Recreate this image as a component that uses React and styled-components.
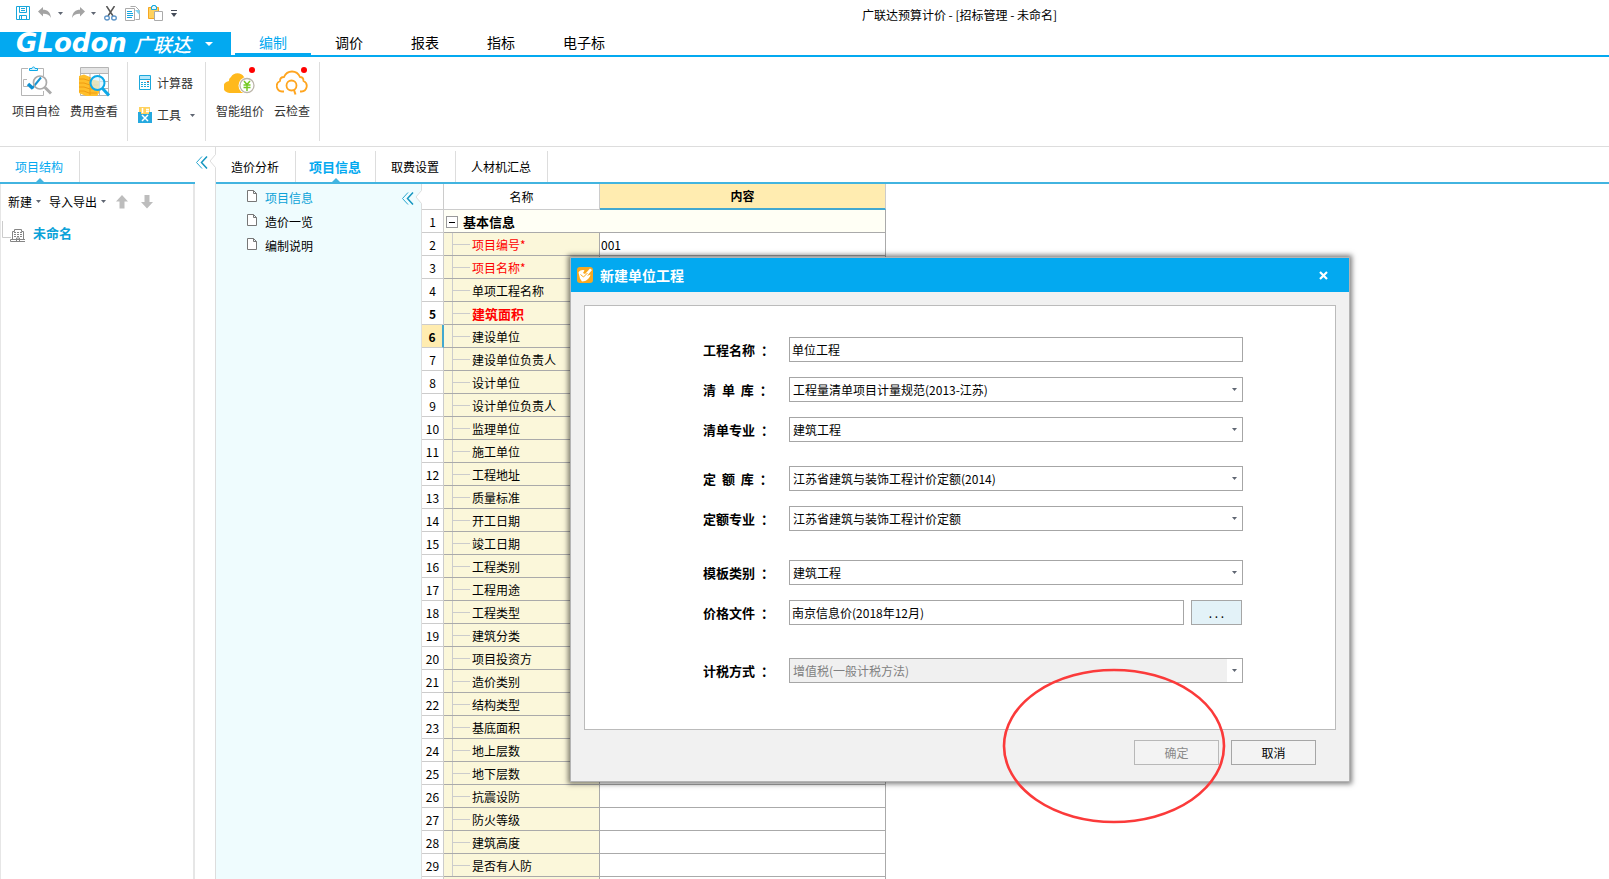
import { useState } from 'react'
import styled, { createGlobalStyle } from 'styled-components'

const menuTabs = ['编制', '调价', '报表', '指标', '电子标']
const mainTabs = ['造价分析', '项目信息', '取费设置', '人材机汇总']
const infoPages = ['项目信息', '造价一览', '编制说明']

const infoRows = [
  { name: '项目编号*', value: '001', required: true },
  { name: '项目名称*', required: true },
  { name: '单项工程名称' },
  { name: '建筑面积', required: true, strong: true },
  { name: '建设单位', current: true },
  { name: '建设单位负责人' },
  { name: '设计单位' },
  { name: '设计单位负责人' },
  { name: '监理单位' },
  { name: '施工单位' },
  { name: '工程地址' },
  { name: '质量标准' },
  { name: '开工日期' },
  { name: '竣工日期' },
  { name: '工程类别' },
  { name: '工程用途' },
  { name: '工程类型' },
  { name: '建筑分类' },
  { name: '项目投资方' },
  { name: '造价类别' },
  { name: '结构类型' },
  { name: '基底面积' },
  { name: '地上层数' },
  { name: '地下层数' },
  { name: '抗震设防' },
  { name: '防火等级' },
  { name: '建筑高度' },
  { name: '是否有人防' },
]

const Caret = ({ color = '#5f6672' }) => (
  <svg width="5" height="3" viewBox="0 0 5 3">
    <path d="M0 0h5L2.5 3z" fill={color} />
  </svg>
)

const SaveIcon = () => (
  <svg width="14" height="14" viewBox="0 0 14 14" fill="none" stroke="#1aa7dc">
    <path d="M.5.5h13v13H.5z" />
    <path d="M3.5.5v6h7v-6M5 2.5h4M5 4.5h4M3.5 13.5v-4h7v4M5.5 10v3" />
  </svg>
)

const UndoIcon = () => (
  <svg width="14" height="12" viewBox="0 0 14 12">
    <path d="M0 4.5 5 0v2.7c4.500 0 7.500 2.300 8 8.300-1.500-3.200-4-4.300-8-4.200V9.500z" fill="#a3a3a3" />
  </svg>
)

const RedoIcon = () => (
  <svg width="14" height="12" viewBox="0 0 14 12">
    <path d="M14 4.500 9 0v2.700C4.500 2.700 1.500 5 1 11c1.500-3.200 4-4.300 8-4.200v2.700z" fill="#a3a3a3" />
  </svg>
)

const CutIcon = () => (
  <svg width="13" height="15" viewBox="0 0 13 15" fill="none">
    <path d="M2.500 0 9 10M10.500 0 4 10" stroke="#555" strokeWidth="1.500" />
    <ellipse cx="3" cy="12" rx="2.300" ry="2" stroke="#5b93c7" strokeWidth="1.300" />
    <ellipse cx="10" cy="12" rx="2.300" ry="2" stroke="#5b93c7" strokeWidth="1.300" />
  </svg>
)

const CopyIcon = () => (
  <svg width="15" height="15" viewBox="0 0 15 15" fill="none">
    <path d="M5.500.5h5l4 4v9h-4" fill="#fff" stroke="#aaa" />
    <path d="M10 4h4.500v5z" fill="#7fd3f2" />
    <path d="M.5 2.500h9v12h-9z" fill="#fff" stroke="#aaa" />
    <path d="M2 5.500h5M2 7.500h6M2 9.500h6M2 11.500h5" stroke="#14a5e0" />
  </svg>
)

const PasteIcon = () => (
  <svg width="15" height="16" viewBox="0 0 15 16" fill="none">
    <path d="M.5 2.500h10v11H.5z" fill="#ffd25e" stroke="#f5a623" />
    <path d="M3.500 1.500h1v-1h3v1h1v3h-5z" fill="#e5f7fd" stroke="#17a8dd" />
    <path d="M6.500 6.500h8v9h-8z" fill="#fff" stroke="#aaa" />
  </svg>
)

const MoreIcon = () => (
  <svg width="6" height="7" viewBox="0 0 6 7" fill="#444b58">
    <path d="M0 0h6v1H0zM0 3h6L3 7z" />
  </svg>
)

const CheckProjectIcon = () => (
  <svg width="32" height="32" viewBox="0 0 32 32" fill="none">
    <path d="M8 2.500H1.500v27h22V25M17 2.500h6.500V10" stroke="#b5b5b5" />
    <path d="M9.500 4.500v-2h2.500c0-2 3-2 3 0h2.500v2z" fill="#d7f3fd" stroke="#0da9e8" />
    <path d="M7 13.500H3.500v7H8" stroke="#b5b5b5" />
    <path d="M12 22.500l9-11" stroke="#1695d3" strokeWidth="2" />
    <path d="M8 18l5 4.500" stroke="#0b8fd0" strokeWidth="3.500" />
    <circle cx="20" cy="16.500" r="6.500" stroke="#aaa" strokeWidth="1.700" />
    <path d="M25 21.500l6 6" stroke="#aaa" strokeWidth="3" />
  </svg>
)

const CostIcon = () => (
  <svg width="32" height="32" viewBox="0 0 32 32" fill="none">
    <path d="M2.500 1.500h28v28h-28z" fill="#fff" stroke="#b5b5b5" />
    <path d="M3 2h27v5H3z" fill="#e4e4e4" />
    <path d="M2.500 7.500h28M2.500 15.500h28M2.500 22.500h28M12 8v21M21.500 8v21" stroke="#b5b5b5" />
    <path d="M1 10l5-1.500 6 2.500v2l9 2v12l-2 3H8L1 27z" fill="#ffbf2b" />
    <path d="M1 13h5l6 2M1 17h5l6 2h8M1 21h5l6 2h8M1 25h5l5 2h8M12 11v18" stroke="#f09c12" />
    <circle cx="19.500" cy="17" r="7" fill="#d9f4fe" fillOpacity=".7" stroke="#0da9e8" strokeWidth="2" />
    <path d="M24.500 22.500l6.500 7" stroke="#0da9e8" strokeWidth="3" />
  </svg>
)

const CalculatorIcon = () => (
  <svg width="14" height="16" viewBox="0 0 14 16" fill="none">
    <path d="M1.500.5h11v14h-11z" fill="#fff" stroke="#1da8dc" />
    <path d="M2 1h10v3H2z" fill="#b6e8fa" />
    <path d="M1.500 4.500h11" stroke="#1da8dc" />
    <path d="M3 7.500h8M3 9.500h8M3 11.500h8" stroke="#1da8dc" strokeDasharray="2 1" />
    <path d="M9 6.500h2" stroke="#f25c3b" />
  </svg>
)

const ToolsIcon = () => (
  <svg width="14" height="16" viewBox="0 0 14 16" fill="none">
    <path d="M1 0h11v7H1z" fill="#ffd25e" />
    <path d="M4.500 1v5M8 2.500h3M8 4.500h3" stroke="#fff" strokeWidth="1.500" />
    <path d="M0 5h3v2h8V5h3v11H0z" fill="#26a9df" />
    <path d="M4 8l6 6M10 8l-6 6" stroke="#fff" strokeWidth="1.500" />
  </svg>
)

const SmartPriceIcon = () => (
  <svg width="32" height="32" viewBox="0 0 32 32" fill="none">
    <path d="M6 27a6 6 0 0 1-1-12 4 4 0 0 1 2-4 7.500 7.500 0 0 1 13 0l4 6-4 10z" fill="#ffb91d" />
    <circle cx="23" cy="19.500" r="8.500" fill="#fff" />
    <circle cx="23" cy="19.500" r="7" fill="#fff" stroke="#bcb6aa" strokeWidth="1.300" />
    <path d="M20 15l3 3.500 3-3.500M23 18.500V25M19.500 19h7M19.500 21.500h7" stroke="#74c922" strokeWidth="1.500" />
    <circle cx="28" cy="4" r="3" fill="#f00" />
  </svg>
)

const CloudCheckIcon = () => (
  <svg width="32" height="32" viewBox="0 0 32 32" fill="none">
    <path d="M8 25.500H6a5.500 5.500 0 0 1-2-10.500c0-3 2-4 4-4 1.500-3.500 4-5.500 8-5.500s6.500 2 8 5.500c2.500 0 3.500 2 3.500 4a5.500 5.500 0 0 1-2 10.500H24" stroke="#ffa51f" strokeWidth="1.800" />
    <circle cx="15.500" cy="19.500" r="5" stroke="#ffa51f" strokeWidth="1.800" />
    <path d="M18 24l1.500 4.500" stroke="#ffa51f" strokeWidth="2" />
    <circle cx="28" cy="4" r="3" fill="#f00" />
  </svg>
)

const ArrowIcon = ({ down }) => (
  <svg width="12" height="14" viewBox="0 0 12 14">
    <path d={down ? 'M6 13.500 0 7h3.500V0h5v7H12z' : 'M6 0l6 6.500H8.500v7h-5v-7H0z'} fill="#bdbdbd" />
  </svg>
)

const BuildingIcon = () => (
  <svg width="24" height="24" viewBox="1 0 24 24" fill="none">
    <path d="M2.500 0v16.500H11" stroke="#ccc" />
    <path d="M12.500 18.500v-8h2v-2h7v2h2v8M10.500 18.500v2h15v-2z" stroke="#858585" />
    <path d="M14 11.500h8M14 13.500h8M14 15.500h8" stroke="#858585" strokeDasharray="2 1" />
    <path d="M16.500 20v-3h3v3" stroke="#858585" />
  </svg>
)

const PageIcon = () => (
  <svg width="10" height="12" viewBox="0 0 10 12">
    <path d="M.5.5h6l3 3v8h-9zM6.500.5v3h3" fill="#fff" stroke="#777" />
  </svg>
)

const CollapseIcon = () => (
  <svg width="12" height="13" viewBox="0 0 12 13" fill="none">
    <path d="M6 .5l-5.500 6 5.500 6" stroke="#2aa7cf" />
    <path d="M11 .5l-5.500 6 5.500 6" stroke="#1596c0" strokeWidth="1.500" />
  </svg>
)

const NotchIcon = () => (
  <svg width="7" height="14" viewBox="0 0 7 14">
    <path d="M7 0 1 7l6 7z" fill="#fff" />
    <path d="M6.500.5 1 7l5.500 6.500" fill="none" stroke="#ddd" />
  </svg>
)

const AppIcon = () => (
  <svg width="16" height="16" viewBox="0 0 16 16" fill="none">
    <rect width="16" height="16" rx="3" fill="#f9a81f" />
    <path d="M1.500 5.500C3 3 6 2.500 7.500 3.500L6 6l2 1 5-5.500L15 3l-5 6 3.500-1.500C13 11 9.500 14.500 5 14.500l-2-3z" fill="#fff" />
    <path d="M3.500 7.500l3 2.500 4-4" stroke="#f9a81f" />
  </svg>
)

const CloseIcon = () => (
  <svg width="9" height="9" viewBox="0 0 9 9">
    <path d="M1 1l7 7M8 1L1 8" stroke="#fff" strokeWidth="2.200" />
  </svg>
)

const SelectField = ({ id, label, options, disabled }) => (
  <Field>
    <FieldLabel htmlFor={id}>{label}  ：</FieldLabel>
    <SelectBox>
      <Select id={id} disabled={disabled}>
        {options.map((option) => (
          <option key={option}>{option}</option>
        ))}
      </Select>
      <SelectArrow><Caret /></SelectArrow>
    </SelectBox>
  </Field>
)

const NewUnitDialog = () => {
  const [unitName, setUnitName] = useState('单位工程')
  const [priceFile, setPriceFile] = useState('南京信息价(2018年12月)')

  return (
    <Dialog role="dialog" aria-labelledby="dialog-title">
      <DialogHeader>
        <AppIcon />
        <DialogTitle id="dialog-title">新建单位工程</DialogTitle>
        <CloseButton type="button" aria-label="关闭"><CloseIcon /></CloseButton>
      </DialogHeader>
      <DialogBody>
        <FormPanel>
          <Field>
            <FieldLabel htmlFor="unit-name">工程名称  ：</FieldLabel>
            <TextInput id="unit-name" value={unitName} onChange={(event) => setUnitName(event.target.value)} />
          </Field>
          <SelectField id="bill-lib" label="清  单  库" options={['工程量清单项目计量规范(2013-江苏)']} />
          <SelectField id="bill-major" label="清单专业" options={['建筑工程']} />
          <Space $size={9} />
          <SelectField id="norm-lib" label="定  额  库" options={['江苏省建筑与装饰工程计价定额(2014)']} />
          <SelectField id="norm-major" label="定额专业" options={['江苏省建筑与装饰工程计价定额']} />
          <Space $size={14} />
          <SelectField id="template" label="模板类别" options={['建筑工程']} />
          <Field>
            <FieldLabel htmlFor="price-file">价格文件  ：</FieldLabel>
            <TextInput id="price-file" value={priceFile} onChange={(event) => setPriceFile(event.target.value)} />
            <BrowseButton type="button">. . .</BrowseButton>
          </Field>
          <Space $size={18} />
          <SelectField id="tax" label="计税方式" options={['增值税(一般计税方法)']} disabled />
        </FormPanel>
        <DialogFooter>
          <DialogButton type="button" disabled>确定</DialogButton>
          <DialogButton type="button">取消</DialogButton>
        </DialogFooter>
      </DialogBody>
    </Dialog>
  )
}

const App = () => {
  const [menu, setMenu] = useState('编制')
  const [tab, setTab] = useState('项目信息')
  const [page, setPage] = useState('项目信息')

  return (
    <>
      <GlobalStyle />
      <Window>
        <TitleBar>
          <QuickTools>
            <IconButton $width={14} aria-label="保存"><SaveIcon /></IconButton>
            <IconButton $width={25} aria-label="撤销"><UndoIcon /><Caret /></IconButton>
            <IconButton $width={25} aria-label="恢复"><RedoIcon /><Caret /></IconButton>
            <IconButton $width={13} aria-label="剪切"><CutIcon /></IconButton>
            <IconButton $width={15} aria-label="复制"><CopyIcon /></IconButton>
            <IconButton $width={15} aria-label="粘贴"><PasteIcon /></IconButton>
            <IconButton $width={6} aria-label="更多"><MoreIcon /></IconButton>
          </QuickTools>
          <AppTitle>广联达预算计价 - [招标管理 - 未命名]</AppTitle>
        </TitleBar>

        <MenuBar>
          <Brand type="button">
            <BrandLatin>GLodon</BrandLatin>
            <BrandName>广联达</BrandName>
            <svg width="8" height="4" viewBox="0 0 8 4"><path d="M0 0h8L4 4z" fill="#fff" /></svg>
          </Brand>
          {menuTabs.map((name) => (
            <MenuTab key={name} type="button" $active={name === menu} onClick={() => setMenu(name)}>
              {name}
            </MenuTab>
          ))}
        </MenuBar>

        <Ribbon>
          <RibbonGroup>
            <LargeTool type="button"><CheckProjectIcon />项目自检</LargeTool>
            <LargeTool type="button"><CostIcon />费用查看</LargeTool>
          </RibbonGroup>
          <RibbonGroup>
            <SmallTools>
              <SmallTool type="button"><CalculatorIcon />计算器</SmallTool>
              <SmallTool type="button"><ToolsIcon />工具<CaretSlot><Caret /></CaretSlot></SmallTool>
            </SmallTools>
          </RibbonGroup>
          <RibbonGroup>
            <LargeTool type="button"><SmartPriceIcon />智能组价</LargeTool>
            <LargeTool type="button"><CloudCheckIcon />云检查</LargeTool>
          </RibbonGroup>
        </Ribbon>

        <Workspace>
          <ProjectPanel>
            <TabBar>
              <Tab type="button" $active $pad={16}>项目结构</Tab>
            </TabBar>
            <ProjectBody>
              <ProjectTools>
                <TextTool type="button">新建<Caret /></TextTool>
                <TextTool type="button">导入导出<Caret /></TextTool>
                <MoveTools>
                  <IconButton $width={12} aria-label="上移"><ArrowIcon /></IconButton>
                  <IconButton $width={12} aria-label="下移"><ArrowIcon down /></IconButton>
                </MoveTools>
              </ProjectTools>
              <ProjectNode href="#project"><BuildingIcon />未命名</ProjectNode>
            </ProjectBody>
          </ProjectPanel>

          <Gutter>
            <IconButton $width={12} aria-label="收起"><CollapseIcon /></IconButton>
            <Notch $top={7}><NotchIcon /></Notch>
          </Gutter>

          <Main>
            <TabBar>
              {mainTabs.map((name) => (
                <Tab key={name} type="button" $active={name === tab} $bold={name === tab} $pad={name === tab ? 14 : 16} onClick={() => setTab(name)}>
                  {name}
                </Tab>
              ))}
            </TabBar>
            <Content>
              <PageNav>
                <PageList>
                  {infoPages.map((name) => (
                    <PageLink key={name} href="#page" $active={name === page} onClick={() => setPage(name)}>
                      <PageIcon />{name}
                    </PageLink>
                  ))}
                </PageList>
                <NavCollapse>
                  <IconButton $width={12} aria-label="收起"><CollapseIcon /></IconButton>
                </NavCollapse>
                <Notch $top={6}><NotchIcon /></Notch>
              </PageNav>
              <TableArea>
                <InfoTable>
                  <colgroup>
                    <IndexCol />
                    <NameCol />
                    <ValueCol />
                  </colgroup>
                  <thead>
                    <tr>
                      <HeadCell />
                      <HeadCell>名称</HeadCell>
                      <HeadCell $current>内容</HeadCell>
                    </tr>
                  </thead>
                  <tbody>
                    <tr>
                      <IndexCell>1</IndexCell>
                      <SectionCell colSpan={2}>
                        <SectionName>
                          <Expander type="button" aria-label="折叠" />
                          基本信息
                        </SectionName>
                      </SectionCell>
                    </tr>
                    {infoRows.map((row, index) => (
                      <tr key={row.name}>
                        <IndexCell $current={row.current} $strong={row.strong}>{index + 2}</IndexCell>
                        <NameCell>
                          <TreeName>
                            <Branch />
                            <TreeText $required={row.required} $strong={row.strong}>{row.name}</TreeText>
                          </TreeName>
                        </NameCell>
                        <ValueCell>{row.value}</ValueCell>
                      </tr>
                    ))}
                    <tr>
                      <IndexCell />
                      <NameCell />
                      <ValueCell />
                    </tr>
                  </tbody>
                </InfoTable>
              </TableArea>
            </Content>
          </Main>
        </Workspace>

        <NewUnitDialog />
        <Highlight width="224" height="156" viewBox="0 0 224 156">
          <ellipse cx="112" cy="78" rx="110" ry="76" fill="none" stroke="#fb3a3a" strokeWidth="2.600" />
        </Highlight>
      </Window>
    </>
  )
}

const GlobalStyle = createGlobalStyle`
  * {
    box-sizing: border-box;
  }
  body {
    margin: 0;
    background: #fff;
  }
  body, button, input, select {
    font-family: 'Noto Sans CJK SC', sans-serif;
    font-size: 12px;
    line-height: 16px;
    color: #000;
  }
  button {
    padding: 0;
    border: 0;
    background: none;
    white-space: nowrap;
  }
  a {
    text-decoration: none;
  }
  svg {
    display: block;
    flex: none;
  }
`

const Window = styled.div`
  position: relative;
  display: flex;
  flex-direction: column;
  height: 100vh;
  overflow: hidden;
`

const TitleBar = styled.header`
  display: flex;
  flex: none;
  height: 32px;
  padding-left: 16px;
`

const QuickTools = styled.div`
  display: flex;
  align-items: center;
  gap: 8px;
  width: 270px;
  height: 26px;
`

const IconButton = styled.button`
  display: flex;
  align-items: center;
  justify-content: space-between;
  width: ${(props) => props.$width}px;
`

const AppTitle = styled.div`
  flex: 1;
  padding-left: 24px;
  line-height: 30px;
  text-align: center;
`

const MenuBar = styled.nav`
  display: flex;
  flex: none;
  height: 25px;
  border-bottom: 2px solid #03a9f0;
`

const Brand = styled.button`
  display: flex;
  align-items: center;
  width: 231px;
  margin-right: 4px;
  padding-left: 16px;
  background: #03a9f0;
  color: #fff;
`

const BrandLatin = styled.span`
  width: 118px;
  font: italic bold 26px/23px 'DejaVu Sans', sans-serif;
  text-align: left;
`

const BrandName = styled.span`
  width: 71px;
  font-size: 19px;
  line-height: 23px;
  font-style: italic;
  font-weight: 500;
  text-align: left;
`

const MenuTab = styled.button`
  height: 25px;
  padding: 0 24px 2px;
  font-size: 14px;
  color: ${(props) => (props.$active ? '#03a9f0' : '#000')};
  border-bottom: 4px solid ${(props) => (props.$active ? '#03a9f0' : 'transparent')};
  background-clip: padding-box;
`

const Ribbon = styled.div`
  display: flex;
  flex: none;
  height: 90px;
  padding: 5px 0;
  border-bottom: 1px solid #ddd;
`

const RibbonGroup = styled.div`
  display: flex;
  align-items: flex-start;
  gap: 10px;
  padding: 4px 9px 0 10px;
  border-right: 1px solid #ddd;
  &:first-child {
    padding-left: 12px;
  }
`

const LargeTool = styled.button`
  display: flex;
  flex-direction: column;
  align-items: center;
  gap: 5px;
  color: #333;
`

const SmallTools = styled.div`
  display: flex;
  flex-direction: column;
  gap: 16px;
  padding-top: 9px;
`

const SmallTool = styled.button`
  display: flex;
  align-items: center;
  gap: 5px;
  width: 58px;
  color: #333;
`

const CaretSlot = styled.span`
  padding-left: 4px;
`

const Workspace = styled.div`
  display: flex;
  flex: 1;
  min-height: 0;
`

const ProjectPanel = styled.aside`
  display: flex;
  flex-direction: column;
  flex: none;
  width: 195px;
`

const TabBar = styled.div`
  display: flex;
  flex: none;
  height: 37px;
  padding-top: 4px;
  border-bottom: 2px solid #42b4e0;
`

const Tab = styled.button`
  position: relative;
  padding: 0 ${(props) => props.$pad}px 0 ${(props) => props.$pad - 1}px;
  border-right: 1px solid #ddd;
  font-size: ${(props) => (props.$bold ? 13 : 12)}px;
  font-weight: ${(props) => (props.$bold ? 700 : 400)};
  color: ${(props) => (props.$active ? '#03a9f0' : '#000')};
  &::after {
    content: '';
    display: ${(props) => (props.$active ? 'block' : 'none')};
    position: absolute;
    bottom: 0;
    left: calc(50% - 4px);
    border: 4px solid transparent;
    border-top: 0;
    border-bottom-color: #42b4e0;
  }
`

const ProjectBody = styled.div`
  flex: 1;
  border: 0 solid #e6e6e6;
  border-width: 0 2px 0 1px;
`

const ProjectTools = styled.div`
  display: flex;
  align-items: center;
  gap: 8px;
  height: 35px;
  padding-left: 7px;
`

const TextTool = styled.button`
  display: flex;
  align-items: center;
  gap: 4px;
`

const MoveTools = styled.div`
  display: flex;
  gap: 13px;
  padding-left: 2px;
`

const ProjectNode = styled.a`
  display: flex;
  align-items: center;
  gap: 8px;
  height: 28px;
  font-size: 13px;
  font-weight: 700;
  color: #0ba2d8;
`

const Gutter = styled.div`
  position: relative;
  flex: none;
  width: 21px;
  padding: 9px 0 0 1px;
  border-right: 1px solid #ddd;
`

const Notch = styled.span`
  position: absolute;
  top: ${(props) => props.$top}px;
  right: -1px;
`

const Main = styled.main`
  display: flex;
  flex-direction: column;
  flex: 1;
  min-width: 0;
`

const Content = styled.div`
  display: flex;
  flex: 1;
  min-height: 0;
`

const PageNav = styled.div`
  position: relative;
  display: flex;
  justify-content: space-between;
  flex: none;
  width: 206px;
  padding: 2px 7px 0 31px;
  border-right: 1px solid #ddd;
  background: #effcfe;
`

const PageList = styled.div`
  display: flex;
  flex-direction: column;
`

const PageLink = styled.a`
  display: flex;
  align-items: center;
  gap: 8px;
  height: 24px;
  color: ${(props) => (props.$active ? '#0ba2d8' : '#000')};
  svg {
    margin-bottom: 4px;
  }
`

const NavCollapse = styled.div`
  padding-top: 6px;
`

const TableArea = styled.div`
  flex: 1;
  overflow: hidden;
`

const InfoTable = styled.table`
  width: 464px;
  table-layout: fixed;
  border-collapse: separate;
  border-spacing: 0;
`

const IndexCol = styled.col`
  width: 22px;
`

const NameCol = styled.col`
  width: 156px;
`

const ValueCol = styled.col`
  width: 286px;
`

const HeadCell = styled.th`
  height: 26px;
  padding: 0;
  font-weight: ${(props) => (props.$current ? 700 : 400)};
  background: ${(props) => (props.$current ? '#ffecb0' : '#fff')};
  border-right: 1px solid #ccc;
  border-bottom: ${(props) => (props.$current ? '2px solid #42a8d0' : '1px solid #ccc')};
`

const IndexCell = styled.td`
  height: 23px;
  padding: 2px 0 0;
  text-align: center;
  font-weight: ${(props) => (props.$current || props.$strong ? 700 : 400)};
  background: ${(props) => (props.$current ? '#ffecb0' : '#fff')};
  border-right: ${(props) => (props.$current ? '2px solid #42a8d0' : '1px solid #ccc')};
  border-bottom: 1px solid #ccc;
`

const SectionCell = styled.td`
  padding: 2px 0 0;
  background: #fffff5;
  border: 0 solid #aaa;
  border-width: 0 1px 1px 0;
`

const SectionName = styled.div`
  display: flex;
  align-items: center;
  gap: 5px;
  padding-left: 2px;
  font-size: 13px;
  font-weight: 700;
`

const Expander = styled.button`
  width: 12px;
  height: 12px;
  border: 1px solid #999;
  background: linear-gradient(#000, #000) center / 6px 1px no-repeat #fff;
`

const NameCell = styled.td`
  padding: 0;
  background: #fbf7da;
  border: 0 solid #aaa;
  border-width: 0 1px 1px 0;
`

const TreeName = styled.div`
  display: flex;
  align-items: center;
  height: 22px;
`

const TreeText = styled.span`
  padding-top: 2px;
  font-size: ${(props) => (props.$strong ? 13 : 12)}px;
  font-weight: ${(props) => (props.$strong ? 700 : 400)};
  color: ${(props) => (props.$required ? '#f00' : '#000')};
`

const Branch = styled.span`
  width: 18px;
  height: 22px;
  margin: 0 2px 0 8px;
  border-left: 1px solid #ccc;
  background: linear-gradient(#ccc, #ccc) center / 100% 1px no-repeat;
`

const ValueCell = styled.td`
  padding: 2px 0 0 1px;
  border: 0 solid #aaa;
  border-width: 0 1px 1px 0;
`

const Dialog = styled.section`
  position: absolute;
  top: 257px;
  left: 570px;
  width: 780px;
  border: 1px solid #b4b4b4;
  background: #f1f1f1;
  box-shadow: 0 0 5px 2px rgba(0, 0, 0, 0.5);
`

const DialogHeader = styled.header`
  display: flex;
  align-items: center;
  gap: 7px;
  height: 34px;
  padding: 0 21px 0 6px;
  background: #03a9f0;
`

const DialogTitle = styled.h2`
  flex: 1;
  margin: 0;
  font-size: 14px;
  line-height: 20px;
  color: #fff;
`

const CloseButton = styled.button`
  width: 9px;
`

const DialogBody = styled.div`
  padding: 13px 13px 16px;
`

const FormPanel = styled.form`
  display: flex;
  flex-direction: column;
  gap: 15px;
  padding: 31px 92px 46px 118px;
  border: 1px solid #bbb;
  background: #fff;
`

const Field = styled.div`
  display: flex;
  height: 25px;
`

const FieldLabel = styled.label`
  width: 86px;
  font-size: 13px;
  line-height: 25px;
  font-weight: 700;
  white-space: pre;
`

/* extra distance between the groups of fields, on top of the panel's gap */
const Space = styled.div`
  height: ${(props) => props.$size}px;
  margin-bottom: -15px;
`

const TextInput = styled.input`
  flex: 1;
  min-width: 0;
  padding: 0 2px;
  border: 1px solid #a6a6a6;
  border-radius: 0;
  background: #fff;
`

const SelectBox = styled.div`
  position: relative;
  display: flex;
  flex: 1;
`

const Select = styled.select`
  flex: 1;
  appearance: none;
  padding: 0 16px 0 3px;
  border: 1px solid #a6a6a6;
  border-radius: 0;
  background: #fff;
  &:disabled {
    color: #808080;
    opacity: 1;
    background: #f0f0f0;
  }
`

const SelectArrow = styled.span`
  position: absolute;
  top: 1px;
  right: 1px;
  bottom: 1px;
  display: flex;
  align-items: center;
  justify-content: center;
  width: 15px;
  background: #fff;
  pointer-events: none;
`

const BrowseButton = styled.button`
  width: 51px;
  margin: 0 1px 0 7px;
  border: 1px solid #a6a6a6;
  background: #e3f2f8;
`

const DialogFooter = styled.footer`
  display: flex;
  justify-content: flex-end;
  gap: 12px;
  padding: 10px 20px 0 0;
`

const DialogButton = styled.button`
  width: 85px;
  height: 25px;
  border: 1px solid #a6a6a6;
  background: #f3f3f3;
  &:disabled {
    color: #8a8a8a;
    border-color: #b8b8b8;
  }
`

const Highlight = styled.svg`
  position: absolute;
  top: 668px;
  left: 1002px;
  pointer-events: none;
`

export default App
